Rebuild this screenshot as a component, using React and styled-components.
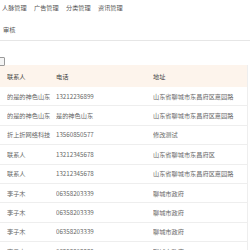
import styled, { createGlobalStyle } from "styled-components";

const GlobalStyle = createGlobalStyle`
  body {
    margin: 0;
    background: #fff;
    font-family: "Noto Sans CJK SC", "Noto Sans", sans-serif;
    overflow: hidden;
  }
`;

const menus = ["人脉管理", "广告管理", "分类管理", "资讯管理"];

const rows = [
  ["的是的神色山东", "13212236899", "山东省聊城市东昌府区嘉园路"],
  ["的是的神色山东", "是的神色山东", "山东省聊城市东昌府区嘉园路"],
  ["折上折网络科技", "13560850577", "修改测试"],
  ["联系人", "13212345678", "山东省聊城市东昌府区"],
  ["联系人", "13212345678", "山东省聊城市东昌府区嘉园路"],
  ["李子木", "06358203339", "聊城市政府"],
  ["李子木", "06358203339", "聊城市政府"],
  ["李子木", "06358203339", "聊城市政府"],
  ["李子木", "06358203339", "聊城市政府"],
];

const App = () => {
  return (
    <Page>
      <GlobalStyle />
      <Nav>
        {menus.map((m) => (
          <NavItem key={m}>{m}</NavItem>
        ))}
      </Nav>
      <SubTitle>审核</SubTitle>
      <Toolbar>
        <ClippedBox />
      </Toolbar>
      <Table>
        <HeadRow>
          <Cell>联系人</Cell>
          <Cell>电话</Cell>
          <Cell>地址</Cell>
        </HeadRow>
        {rows.map((r, i) => (
          <Row key={i}>
            <Cell>{r[0]}</Cell>
            <Cell>{r[1]}</Cell>
            <Cell>{r[2]}</Cell>
          </Row>
        ))}
      </Table>
    </Page>
  );
};

const Page = styled.div`
  width: 250px;
  height: 250px;
  overflow: hidden;
`;

const Nav = styled.div`
  display: flex;
  gap: 7px;
  padding: 4px 0 0 2px;
  height: 8px;
`;

const NavItem = styled.span`
  font-size: 6.2px;
  line-height: 8px;
  color: #555;
  width: 25px;
  white-space: nowrap;
`;

const SubTitle = styled.div`
  font-size: 6.2px;
  line-height: 8px;
  color: #555;
  padding: 14px 0 6px 3px;
  height: 8px;
  border-bottom: 1px solid #e6e6e6;
`;

const Toolbar = styled.div`
  height: 24px;
  display: flex;
  align-items: flex-start;
  padding-top: 16px;
  box-sizing: border-box;
`;

const ClippedBox = styled.div`
  width: 14px;
  height: 7px;
  margin-left: -11px;
  border: 1px solid #9a9a9a;
  border-radius: 1px;
  background: #f4f4f4;
`;

const Table = styled.div`
  width: 247px;
  border-right: 1px solid #eee;
`;

const Row = styled.div`
  display: grid;
  grid-template-columns: 49px 97px 1fr;
  align-items: center;
  height: 19.4px;
  padding-left: 7px;
  border-bottom: 1px solid #eeeeee;
  box-sizing: border-box;
  font-size: 6.2px;
  color: #666;
`;

const HeadRow = styled(Row)`
  height: 22px;
  background: #fdf4ec;
  color: #444;
  border-bottom: none;
`;

const Cell = styled.div`
  white-space: nowrap;
  overflow: hidden;
`;

export default App;
